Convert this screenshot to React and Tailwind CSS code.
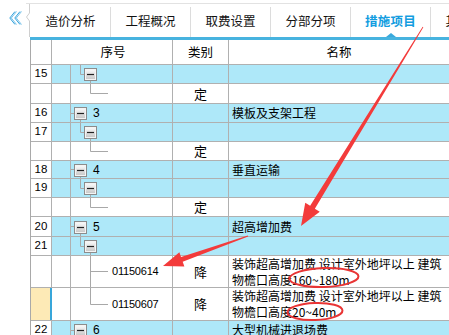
import React from "react";

const LINE = "#a8a8a8";

const rows = [
  { n: "15", kind: "l2", blue: true, h: "h-[19px]", rh: 18 },
  { kind: "leaf", type: "定", h: "h-[20px]", rh: 19 },
  { n: "16", kind: "l1", label: "3", name: "模板及支架工程", blue: true, h: "h-[19px]", rh: 18 },
  { n: "17", kind: "l2", blue: true, h: "h-[19px]", rh: 18 },
  { kind: "leaf", type: "定", h: "h-[19px]", rh: 18 },
  { n: "18", kind: "l1", label: "4", name: "垂直运输", blue: true, h: "h-[18px]", rh: 17 },
  { n: "19", kind: "l2", blue: true, h: "h-[19px]", rh: 18 },
  { kind: "leaf", type: "定", h: "h-[19px]", rh: 18 },
  { n: "20", kind: "l1", label: "5", name: "超高增加费", blue: true, h: "h-[20px]", rh: 19 },
  { n: "21", kind: "l2", blue: true, h: "h-[19px]", rh: 18 },
  {
    kind: "leaf",
    code: "01150614",
    type: "降",
    lines: ["装饰超高增加费 设计室外地坪以上 建筑", "物檐口高度160~180m"],
    h: "h-[32px]",
    rh: 31,
    through: true,
  },
  {
    kind: "leaf",
    code: "01150607",
    type: "降",
    lines: ["装饰超高增加费 设计室外地坪以上 建筑", "物檐口高度20~40m"],
    h: "h-[33px]",
    rh: 32,
    current: true,
  },
  { n: "22", kind: "l1", label: "6", name: "大型机械进退场费", blue: true, h: "h-[19px]", rh: 18 },
];

const tabs = ["造价分析", "工程概况", "取费设置", "分部分项", "措施项目", "其他项目"];

function Box({ x, y, id }) {
  return (
    <g>
      <defs>
        <linearGradient id={id} x1="0" y1="0" x2="0" y2="1">
          <stop offset="0" stopColor="#ffffff" />
          <stop offset="1" stopColor="#c2c2c2" />
        </linearGradient>
      </defs>
      <rect x={x + 0.5} y={y + 0.5} width="12" height="12" fill={`url(#${id})`} stroke="#8c8c8c" />
      <rect x={x + 1.5} y={y + 1.5} width="10" height="10" fill="none" stroke="#f4f4f4" />
      <line x1={x + 3} y1={y + 6.5} x2={x + 10} y2={y + 6.5} stroke="#222" strokeWidth="1.2" />
    </g>
  );
}

function Tree({ row, i }) {
  const h = row.rh;
  const mid = Math.floor(h / 2) + 0.5;
  if (row.kind === "l1") {
    const by = Math.round(h / 2) - 6;
    return (
      <svg width="21" height={h} className="shrink-0">
        <line x1="0" y1={mid} x2="3" y2={mid} stroke={LINE} />
        <line x1="9.5" y1={by + 13} x2="9.5" y2={h} stroke={LINE} />
        <Box x={3} y={by} id={`b${i}`} />
      </svg>
    );
  }
  if (row.kind === "l2") {
    const by = Math.round(h / 2) - 6;
    return (
      <svg width="30" height={h} className="shrink-0">
        <line x1="9.5" y1="0" x2="9.5" y2={mid} stroke={LINE} />
        <line x1="9.5" y1={mid} x2="13" y2={mid} stroke={LINE} />
        <line x1="19.5" y1={by + 13} x2="19.5" y2={h} stroke={LINE} />
        <Box x={13} y={by} id={`b${i}`} />
      </svg>
    );
  }
  return (
    <svg width="41" height={h} className="shrink-0">
      <line x1="19.5" y1="0" x2="19.5" y2={row.through ? h : mid} stroke={LINE} />
      <line x1="19.5" y1={mid} x2="37" y2={mid} stroke={LINE} />
    </svg>
  );
}

function arrow(x1, y1, x2, y2, w1, w2, hl, hw) {
  const dx = x2 - x1;
  const dy = y2 - y1;
  const len = Math.hypot(dx, dy);
  const ux = dx / len;
  const uy = dy / len;
  const nx = -uy;
  const ny = ux;
  const bx = x2 - ux * hl;
  const by = y2 - uy * hl;
  const p = [
    [x1 + (nx * w1) / 2, y1 + (ny * w1) / 2],
    [bx + (nx * w2) / 2, by + (ny * w2) / 2],
    [bx + (nx * hw) / 2, by + (ny * hw) / 2],
    [x2, y2],
    [bx - (nx * hw) / 2, by - (ny * hw) / 2],
    [bx - (nx * w2) / 2, by - (ny * w2) / 2],
    [x1 - (nx * w1) / 2, y1 - (ny * w1) / 2],
  ];
  return p.map((q) => q.join(",")).join(" ");
}

export default function App() {
  return (
    <div className="relative w-[449px] h-[335px] overflow-hidden bg-white font-['Noto_Sans_CJK_SC',sans-serif] text-[12px] text-black">
      {/* tab strip */}
      <div className="flex h-[37px]">
        <div className="w-[26px] shrink-0 pt-[11px] pl-[9px]">
          <svg width="14" height="14" viewBox="0 0 14 14">
            <polyline points="6,0.5 0.8,7 6,13.5" fill="none" stroke="#2e9fdb" strokeWidth="1" />
            <polyline points="7.5,0.5 2.3,7 7.5,13.5" fill="none" stroke="#7cc4ea" strokeWidth="1" />
            <polyline points="11,0.5 5.8,7 11,13.5" fill="none" stroke="#2e9fdb" strokeWidth="1" />
            <polyline points="12.5,0.5 7.3,7 12.5,13.5" fill="none" stroke="#7cc4ea" strokeWidth="1" />
          </svg>
        </div>
        <div className="flex-1 flex mt-[3px] border-t border-[#e2e2e2]">
          <svg width="5" height="33" className="shrink-0">
            <polyline points="3.5,0 3.5,9 0.5,13 3.5,17 3.5,33" fill="none" stroke="#cfcfcf" />
          </svg>
          <div className="flex items-end">
            {tabs.map((t) => {
              const active = t === "措施项目";
              return (
                <div
                  key={t}
                  className="relative w-[80px] h-[30px] shrink-0 flex items-center justify-center border-r border-[#dcdcdc] pb-[2px]"
                >
                  <span
                    className={
                      active
                        ? "text-[12.5px] font-bold text-[#139de0] tracking-[0.3px]"
                        : "text-[12.5px] text-[#111]"
                    }
                  >
                    {t}
                  </span>
                  {active && (
                    <span className="absolute bottom-0 left-[35px] w-0 h-0 border-l-[5px] border-r-[5px] border-b-[4px] border-l-transparent border-r-transparent border-b-[#39a9dd]" />
                  )}
                </div>
              );
            })}
          </div>
        </div>
      </div>

      {/* grid */}
      <div className="ml-[30px]">
        <div className="h-[3px] bg-[#47b3df]" />
        <div className="border-l border-[#a9a9a9]">
          <div className="flex h-[25px] border-b border-[#b0b0b0] text-[12.5px]">
            <div className="w-[21px] shrink-0 border-r border-[#b0b0b0]" />
            <div className="w-[121px] shrink-0 border-r border-[#b0b0b0] flex items-center justify-center pl-[2px]">
              序号
            </div>
            <div className="w-[56px] shrink-0 border-r border-[#b0b0b0] flex items-center justify-center">
              类别
            </div>
            <div className="flex-1 flex items-center justify-center">名称</div>
          </div>

          {rows.map((r, i) => {
            const bg = r.blue ? "bg-[#aee8f9]" : "bg-white";
            return (
              <div key={i} className={`flex ${r.h} border-b border-[#b0b0b0] ${bg}`}>
                <div
                  className={
                    r.current
                      ? "w-[21px] shrink-0 bg-[#fdeab6] border-r-2 border-[#38a6da]"
                      : "w-[21px] shrink-0 bg-white border-r border-[#b0b0b0] flex items-center justify-center font-['Liberation_Sans',sans-serif] text-[11.5px]"
                  }
                >
                  {r.n}
                </div>
                <div className="w-[19px] shrink-0 border-r border-[#b0b0b0]" />
                <div className="w-[102px] shrink-0 border-r border-[#b0b0b0] flex items-center">
                  <Tree row={r} i={i} />
                  {r.label && (
                    <span className="ml-[1px] font-['Liberation_Sans',sans-serif] text-[12px]">{r.label}</span>
                  )}
                  {r.code && (
                    <span className="font-['Liberation_Sans',sans-serif] text-[11px] tracking-[-0.2px]">
                      {r.code}
                    </span>
                  )}
                </div>
                <div className="w-[56px] shrink-0 border-r border-[#b0b0b0] flex items-center justify-center text-[13px]">
                  {r.type}
                </div>
                <div className="flex-1 min-w-0 overflow-hidden whitespace-nowrap pl-[3px] flex flex-col justify-center text-[12px] leading-[16px]">
                  {r.lines ? r.lines.map((l) => <div key={l}>{l}</div>) : r.name}
                </div>
              </div>
            );
          })}
        </div>
      </div>

      {/* annotations */}
      <svg className="absolute inset-0 pointer-events-none" width="449" height="335">
        <polygon points={arrow(423, 27, 301, 226, 0.8, 5.5, 22, 17)} fill="#f33b3b" />
        <polygon points={arrow(248, 236, 163, 266, 0.8, 5, 20, 15)} fill="#f33b3b" />
        <ellipse cx="324" cy="277.5" rx="34.5" ry="9.5" fill="none" stroke="#e93535" strokeWidth="2" transform="rotate(-2 324 277.5)" />
        <ellipse cx="315" cy="311.5" rx="27.5" ry="8.5" fill="none" stroke="#e93535" strokeWidth="2" transform="rotate(-2 315 311.5)" />
      </svg>
    </div>
  );
}
